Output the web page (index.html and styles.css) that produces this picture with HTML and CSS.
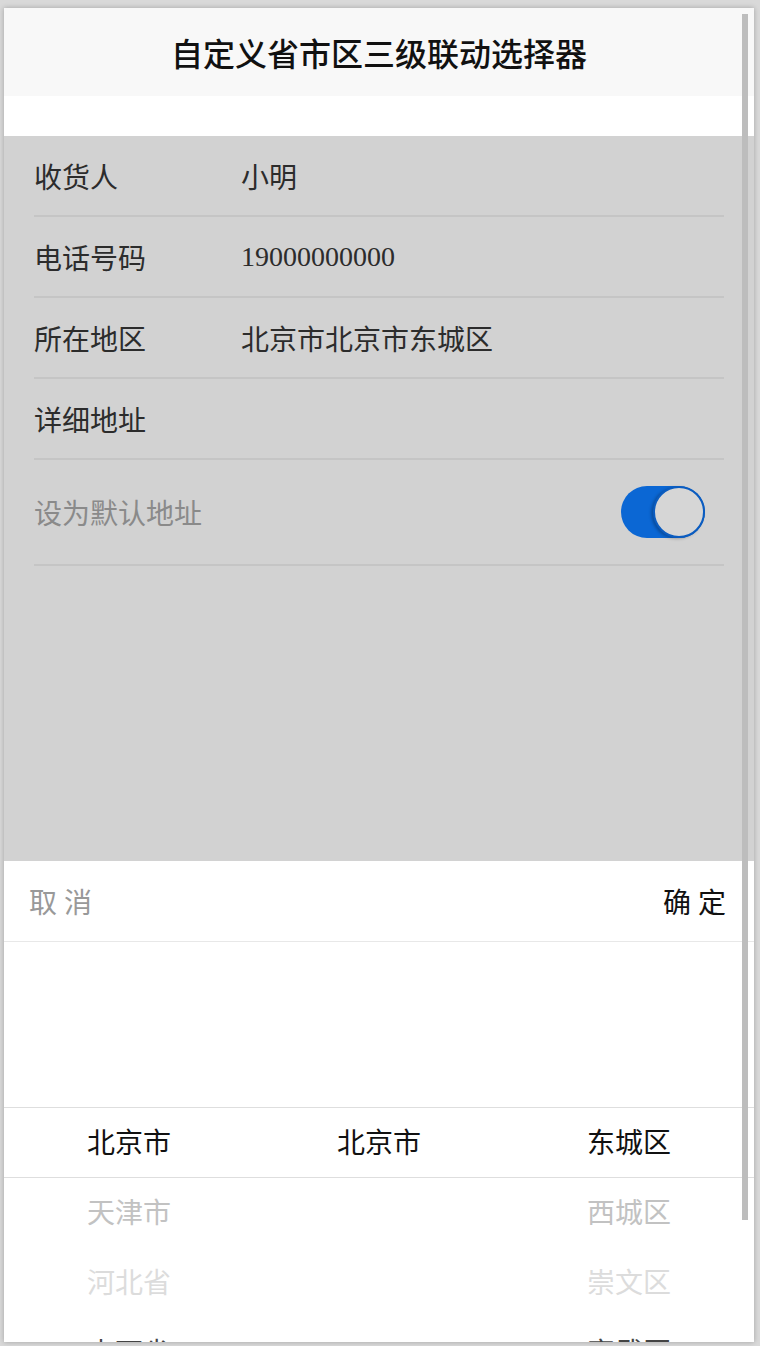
FILE: index.html
```html
<!DOCTYPE html>
<html lang="zh-CN">
<head>
<meta charset="UTF-8" />
<meta name="viewport" content="width=device-width, initial-scale=1" />
<title>自定义省市区三级联动选择器</title>
<link rel="stylesheet" href="styles.css">
</head>
<body>
  <div class="device">
    <header class="title-bar">
      <h1>自定义省市区三级联动选择器</h1>
    </header>
    <div class="spacer"></div>

    <section class="form">
      <div class="row">
        <span class="label">收货人</span>
        <span class="value">小明</span>
      </div>
      <div class="row">
        <span class="label">电话号码</span>
        <span class="value">19000000000</span>
      </div>
      <div class="row">
        <span class="label">所在地区</span>
        <span class="value">北京市北京市东城区</span>
      </div>
      <div class="row">
        <span class="label">详细地址</span>
        <span class="value"></span>
      </div>
      <div class="row row-switch">
        <span class="label muted">设为默认地址</span>
        <span class="switch on"><span class="knob"></span></span>
      </div>
    </section>

    <section class="picker">
      <div class="picker-bar">
        <span class="btn-cancel">取 消</span>
        <span class="btn-ok">确 定</span>
      </div>
      <div class="wheels">
        <div class="band"></div>
        <ul class="wheel">
          <li class="sel">北京市</li>
          <li class="near">天津市</li>
          <li class="far">河北省</li>
          <li class="rest">山西省</li>
        </ul>
        <ul class="wheel">
          <li class="sel">北京市</li>
        </ul>
        <ul class="wheel">
          <li class="sel">东城区</li>
          <li class="near">西城区</li>
          <li class="far">崇文区</li>
          <li class="rest">宣武区</li>
        </ul>
      </div>
    </section>

    <div class="scrollbar"></div>
  </div>
</body>
</html>
```

FILE: styles.css
```css
html, body {
  margin: 0;
  padding: 0;
}
body {
  background-color: #d9d9d9;
  font-family: "Liberation Serif", "Noto Sans CJK SC", serif;
  padding: 8px 6px 0 4px;
  height: 1346px;
  box-sizing: border-box;
  overflow: hidden;
}
.device {
  position: relative;
  width: 750px;
  height: 1334px;
  background-color: #fff;
  box-shadow: 0 0 5px rgba(0, 0, 0, 0.25);
  overflow: hidden;
}
.title-bar {
  height: 88px;
  background-color: #f8f8f8;
  display: flex;
  align-items: center;
  justify-content: center;
}
.title-bar h1 {
  margin: 0;
  font-size: 32px;
  font-weight: 500;
  color: #111;
}
.spacer {
  height: 40px;
}
.form {
  height: 725px;
  background-color: #d2d2d2;
  padding: 0 30px;
  box-sizing: border-box;
}
.row {
  display: flex;
  align-items: center;
  height: 81px;
  border-bottom: 2px solid #c5c5c5;
  box-sizing: border-box;
  font-size: 28px;
  color: #2c2c2c;
}
.row-switch {
  height: 106px;
  justify-content: space-between;
}
.label {
  width: 207px;
}
.muted {
  color: #8a8a8a;
}
.switch {
  width: 84px;
  height: 52px;
  border-radius: 26px;
  background-color: #0b67d4;
  display: flex;
  justify-content: flex-end;
  align-items: center;
  margin-right: 19px;
}
.knob {
  width: 48px;
  height: 48px;
  border-radius: 50%;
  background-color: #d6d6d6;
  border: 2px solid #0b5cc0;
  box-shadow: -2px 1px 3px rgba(0, 0, 0, 0.25);
}
.picker {
  background-color: #fff;
}
.picker-bar {
  height: 80px;
  display: flex;
  align-items: center;
  justify-content: space-between;
  padding: 0 28px 0 25px;
  border-bottom: 1px solid #e8e8e8;
  font-size: 28px;
}
.btn-cancel {
  color: #999;
}
.btn-ok {
  color: #111;
}
.wheels {
  position: relative;
  display: grid;
  grid-template-columns: repeat(3, 1fr);
  padding-top: 165px;
}
.band {
  position: absolute;
  left: 0;
  right: 0;
  top: 165px;
  height: 69px;
  border-top: 1px solid #dedede;
  border-bottom: 1px solid #dedede;
}
.wheel {
  list-style: none;
  margin: 0;
  padding: 2px 0 0;
}
.wheel li {
  height: 70px;
  line-height: 70px;
  text-align: center;
  font-size: 28px;
}
.wheel .sel {
  color: #111;
}
.wheel .near {
  color: #c2c2c2;
}
.wheel .far {
  color: #dcdcdc;
}
.wheel .rest {
  color: #444;
}
.scrollbar {
  position: absolute;
  top: 6px;
  right: 6px;
  width: 6px;
  height: 1206px;
  background-color: #bdbdbd;
}
```
